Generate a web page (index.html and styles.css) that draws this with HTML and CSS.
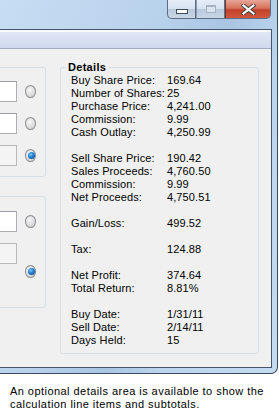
FILE: index.html
```html
<!DOCTYPE html>
<html>
<head>
    <title>Details</title>
    <meta name="viewport" content="width=device-width, initial-scale=1.0">
    <link rel="stylesheet" href="styles.css">
</head>
<body>
    <div class="window">
        <div class="titlebar">
            <div class="caption-buttons">
                <span class="cbtn btn-min"><i></i></span>
                <span class="cbtn btn-max"><i></i></span>
                <span class="cbtn btn-close">
                    <svg width="15" height="11" viewBox="0 0 15 11">
                        <path d="M2.5 1.5 L12.5 9.5 M12.5 1.5 L2.5 9.5" stroke="#3b3b3b" stroke-width="4" stroke-linecap="square"/>
                        <path d="M2.5 1.5 L12.5 9.5 M12.5 1.5 L2.5 9.5" stroke="#ffffff" stroke-width="2.2" stroke-linecap="square"/>
                    </svg>
                </span>
            </div>
        </div>
        <div class="client">
            <div class="toolbar"></div>
            <div class="main">
                <div class="left">
                    <div class="group group-buy">
                        <div class="row"><span class="textbox"></span><span class="radio"></span></div>
                        <div class="row"><span class="textbox"></span><span class="radio"></span></div>
                        <div class="row"><span class="textbox readonly"></span><span class="radio checked"></span></div>
                    </div>
                    <div class="group group-sell">
                        <div class="row"><span class="textbox"></span><span class="radio"></span></div>
                        <div class="row row-split"><span class="textbox readonly"></span><span class="radio checked"></span></div>
                    </div>
                </div>
                <fieldset class="details">
                    <legend>Details</legend>
                    <div class="detail-grid">
                        <span>Buy Share Price:</span><span>169.64</span>
                        <span>Number of Shares:</span><span>25</span>
                        <span>Purchase Price:</span><span>4,241.00</span>
                        <span>Commission:</span><span>9.99</span>
                        <span>Cash Outlay:</span><span>4,250.99</span>
                        <span class="blank"></span>
                        <span>Sell Share Price:</span><span>190.42</span>
                        <span>Sales Proceeds:</span><span>4,760.50</span>
                        <span>Commission:</span><span>9.99</span>
                        <span>Net Proceeds:</span><span>4,750.51</span>
                        <span class="blank"></span>
                        <span>Gain/Loss:</span><span>499.52</span>
                        <span class="blank"></span>
                        <span>Tax:</span><span>124.88</span>
                        <span class="blank"></span>
                        <span>Net Profit:</span><span>374.64</span>
                        <span>Total Return:</span><span>8.81%</span>
                        <span class="blank"></span>
                        <span>Buy Date:</span><span>1/31/11</span>
                        <span>Sell Date:</span><span>2/14/11</span>
                        <span>Days Held:</span><span>15</span>
                    </div>
                </fieldset>
            </div>
        </div>
    </div>
    <p class="note">An optional details area is available to show the calculation line items and subtotals.</p>
</body>
</html>
```
FILE: styles.css
```css
body {margin: 0; background: #ffffff; color: #000000; font-family: "Liberation Sans", Arial, sans-serif; font-size: 11px; letter-spacing: 0.45px; overflow: hidden;}

.window {width: 278px; height: 374px; box-sizing: border-box; padding: 0 5px 5px 0; border-right: 1px solid #3a4b60; border-bottom: 1px solid #3a4b60; border-bottom-right-radius: 7px; background: linear-gradient(110deg, #c6ddf3 0%, #b9d2ec 40%, #a8c5e2 58%, #bcd5ee 72%, #c4dbf1 100%); display: flex; flex-direction: column;}
.titlebar {height: 29px; display: flex; justify-content: flex-end; align-items: flex-start;}
.caption-buttons {display: flex; height: 19px; margin-right: 1px;}
.cbtn {height: 18px; border: 1px solid #5d6e84; border-top: none; box-sizing: content-box; display: flex; align-items: center; justify-content: center;}
.btn-min {width: 27px; border-bottom-left-radius: 5px; background: linear-gradient(#e6eef7 0%, #d6e2ef 48%, #b9cadd 52%, #c9d7e7 100%);}
.btn-max {width: 27px; border-left: 1px solid #8b9cb1; background: linear-gradient(#e6eef7 0%, #d6e2ef 48%, #b9cadd 52%, #c9d7e7 100%);}
.btn-close {width: 44px; border-left: 1px solid #6b3a33; border-bottom-right-radius: 5px; background: linear-gradient(#e7a596 0%, #d7735c 45%, #c2412a 55%, #d0573d 100%);}
.btn-min i {width: 10px; height: 3px; margin-top: 5px; background: #ffffff; border: 1px solid #3f4c5c;}
.btn-max i {width: 8px; height: 5px; margin-bottom: 1px; border: 1px solid #a6b3c3; border-top-width: 2px; background: #dbe4ee;}

.client {flex: 1; display: flex; flex-direction: column; background: #f0f0f0; border-top: 1px solid #45566c; border-right: 1px solid #45566c; border-bottom: 1px solid #45566c;}
.toolbar {height: 16px; border-top: 2px solid #f8fafd; border-bottom: 1px solid #a3adbf; background: linear-gradient(#dfe6f5, #d0d9ee);}
.main {flex: 1; display: flex; align-items: flex-start; gap: 14px;}

.left {margin-left: -20px; margin-top: 18px; width: 66px;}
.group {border: 1px solid #d5dfe5; border-radius: 3px; padding: 0 9px 0 0;}
.group-buy {padding-top: 13px; padding-bottom: 10px;}
.group-sell {margin-top: 19px; padding-top: 14px; padding-bottom: 29px;}
.row {display: flex; justify-content: flex-end; align-items: center; gap: 8px; margin-bottom: 11px;}
.row:last-child {margin-bottom: 0;}
.row-split {height: 35px; align-items: flex-start;}
.row-split .radio {align-self: flex-end;}
.textbox {display: block; width: 40px; height: 19px; background: #ffffff; border: 1px solid #abadb3; border-top-color: #9a9ca3;}
.textbox.readonly {background: #f4f4f4; border-color: #b8b9bd;}
.radio {display: block; width: 11px; height: 11px; border-radius: 50%; border: 1px solid #8c8f93; background: radial-gradient(circle at 40% 35%, #f7f7f7 0%, #e1e1e1 45%, #c9c9c9 100%); position: relative;}
.radio.checked::after {content: ""; position: absolute; left: 2px; top: 2px; width: 7px; height: 7px; border-radius: 50%; background: radial-gradient(circle at 40% 35%, #7cc8f6 0%, #1c7fcf 45%, #0b3f86 100%);}

.details {width: 199px; box-sizing: border-box; margin: 12px 0 0 0; padding: 0 10px 6px 10px; border: 1px solid #d5dfe5; border-radius: 3px; min-width: 0;}
.details legend {margin-left: -5px; padding: 0 2px; font-weight: bold; font-size: 11px; letter-spacing: 0.3px; line-height: 13px;}
.detail-grid {display: grid; grid-template-columns: 96px auto; grid-auto-rows: 13px; line-height: 13px; white-space: nowrap; letter-spacing: 0.1px;}
.blank {grid-column: 1 / -1;}

.note {margin: 11px 0 0 10px; line-height: 13px; width: 268px;}
```
